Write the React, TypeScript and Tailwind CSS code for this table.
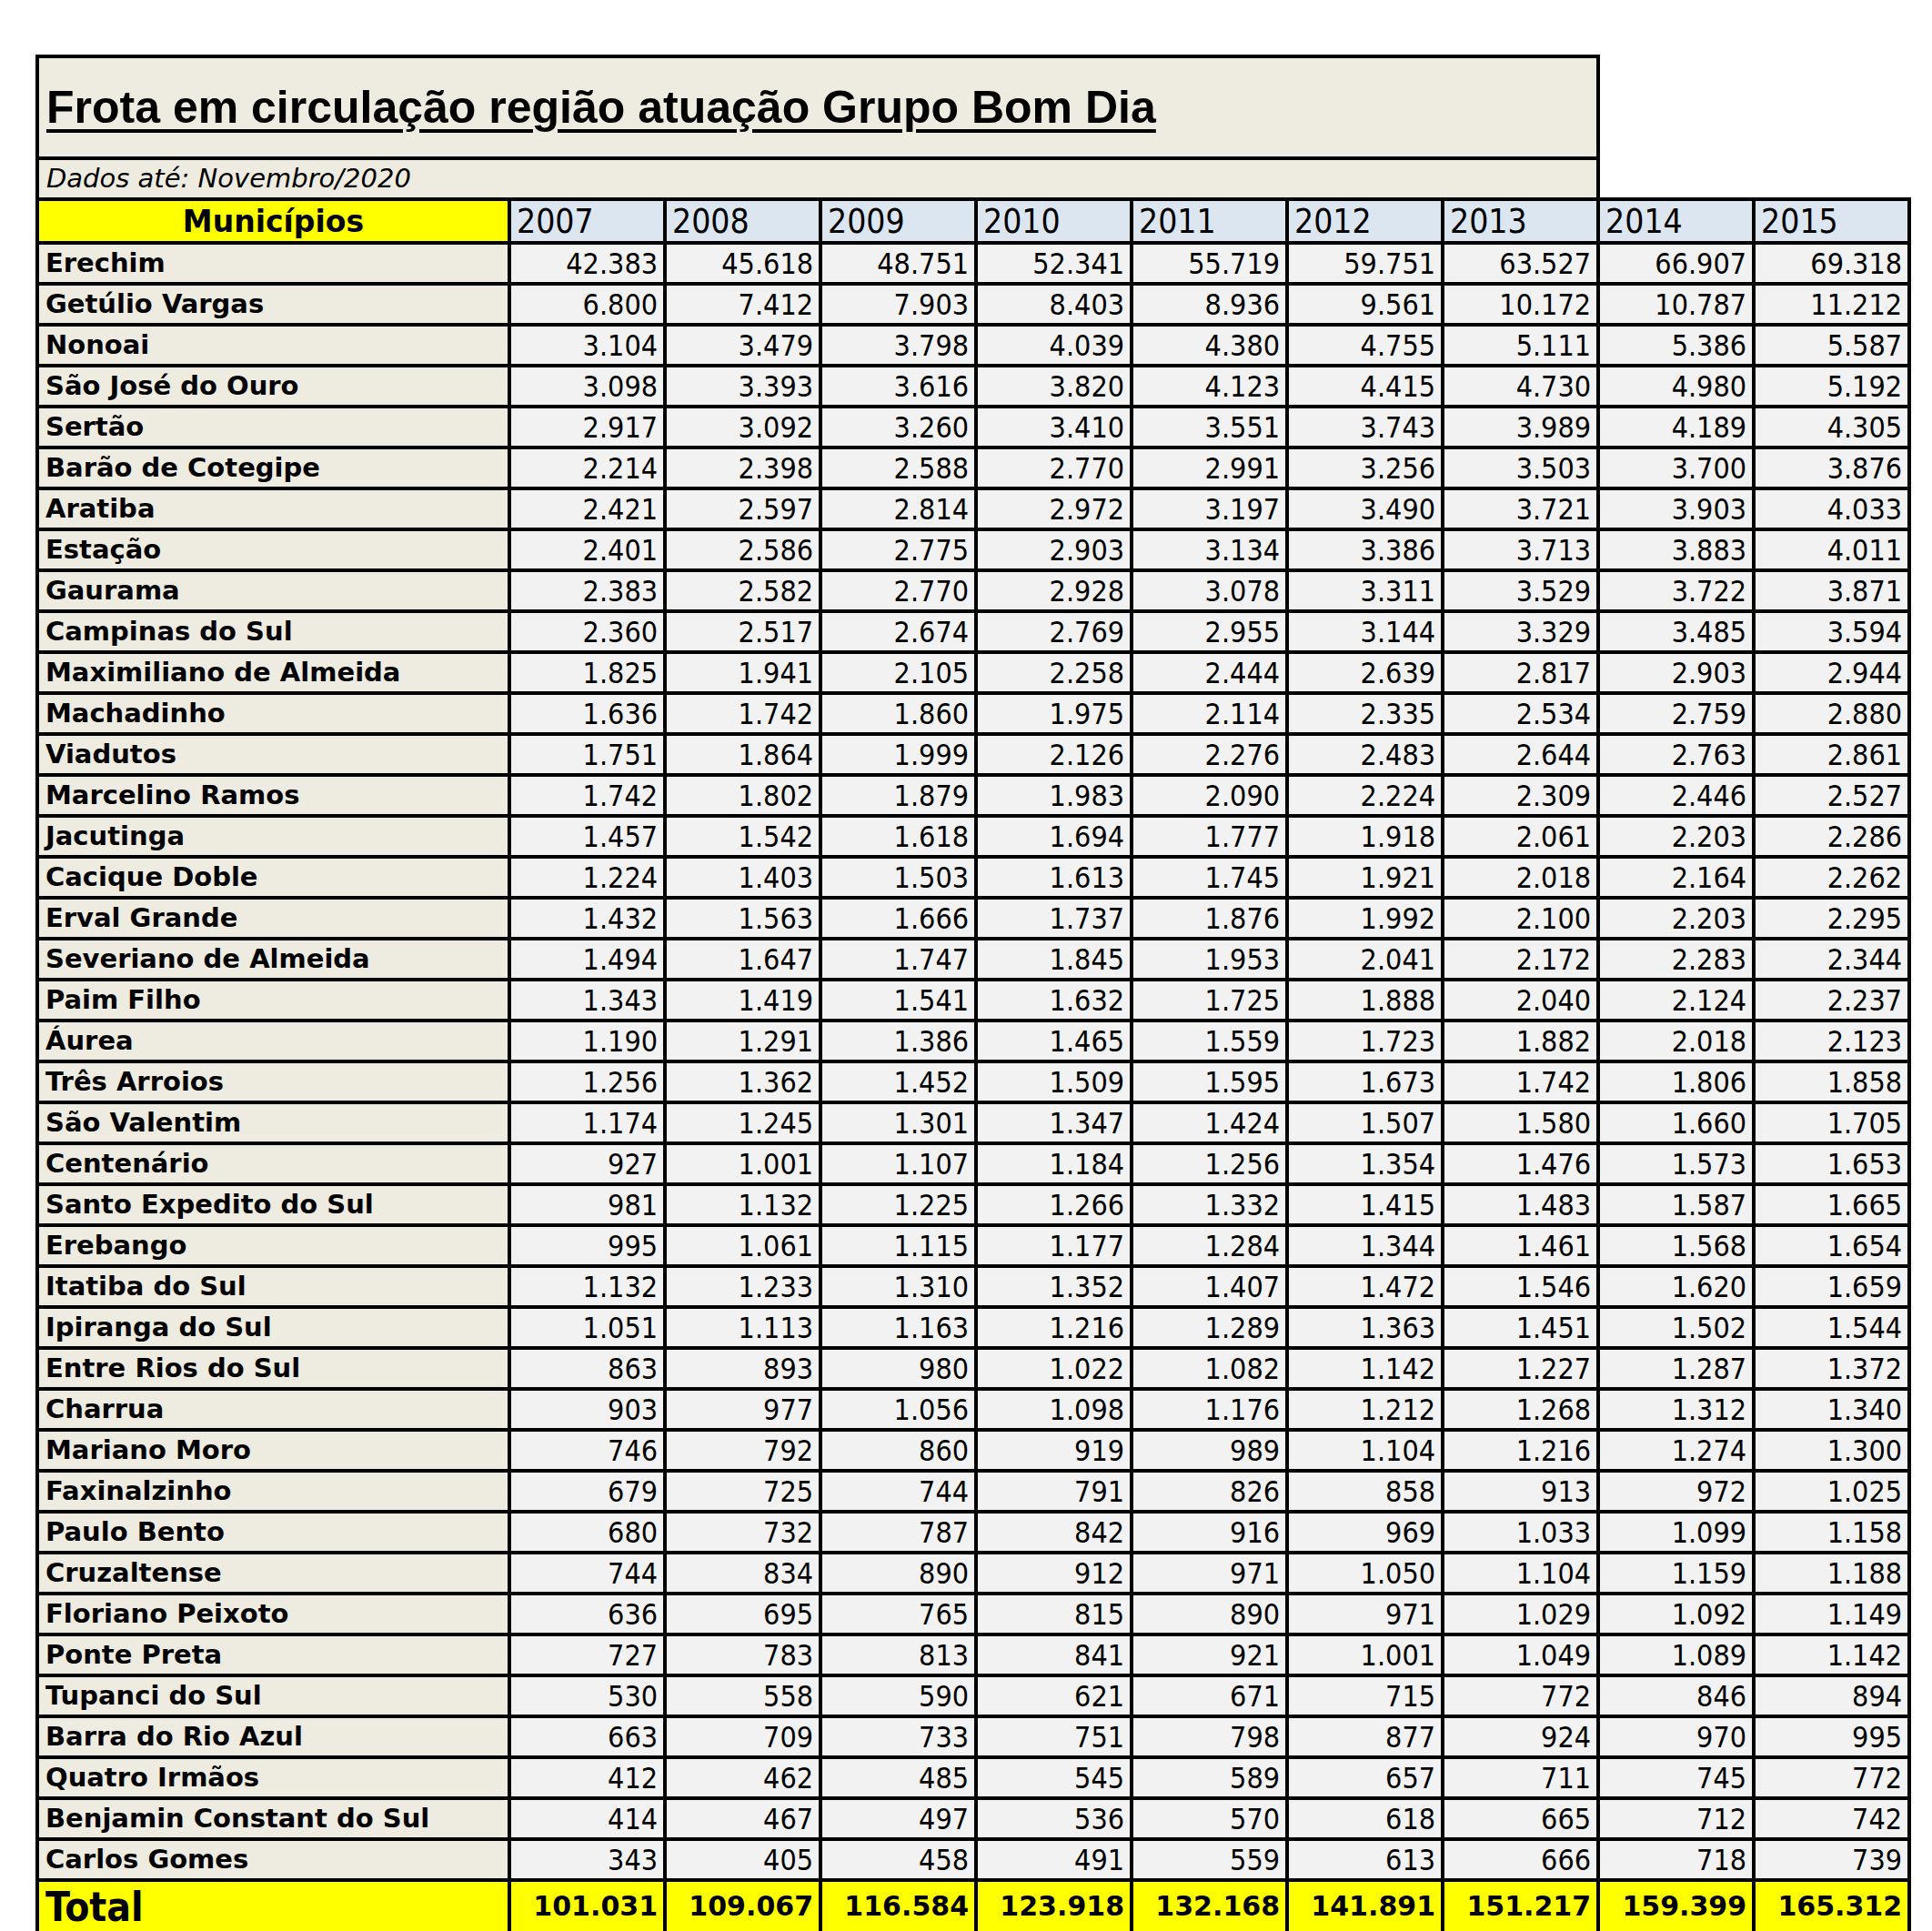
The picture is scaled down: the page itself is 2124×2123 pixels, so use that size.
import React from "react";

type Row = [string, ...string[]];

const rows: Row[] = [
  ["Erechim", "42.383", "45.618", "48.751", "52.341", "55.719", "59.751", "63.527", "66.907", "69.318"],
  ["Getúlio Vargas", "6.800", "7.412", "7.903", "8.403", "8.936", "9.561", "10.172", "10.787", "11.212"],
  ["Nonoai", "3.104", "3.479", "3.798", "4.039", "4.380", "4.755", "5.111", "5.386", "5.587"],
  ["São José do Ouro", "3.098", "3.393", "3.616", "3.820", "4.123", "4.415", "4.730", "4.980", "5.192"],
  ["Sertão", "2.917", "3.092", "3.260", "3.410", "3.551", "3.743", "3.989", "4.189", "4.305"],
  ["Barão de Cotegipe", "2.214", "2.398", "2.588", "2.770", "2.991", "3.256", "3.503", "3.700", "3.876"],
  ["Aratiba", "2.421", "2.597", "2.814", "2.972", "3.197", "3.490", "3.721", "3.903", "4.033"],
  ["Estação", "2.401", "2.586", "2.775", "2.903", "3.134", "3.386", "3.713", "3.883", "4.011"],
  ["Gaurama", "2.383", "2.582", "2.770", "2.928", "3.078", "3.311", "3.529", "3.722", "3.871"],
  ["Campinas do Sul", "2.360", "2.517", "2.674", "2.769", "2.955", "3.144", "3.329", "3.485", "3.594"],
  ["Maximiliano de Almeida", "1.825", "1.941", "2.105", "2.258", "2.444", "2.639", "2.817", "2.903", "2.944"],
  ["Machadinho", "1.636", "1.742", "1.860", "1.975", "2.114", "2.335", "2.534", "2.759", "2.880"],
  ["Viadutos", "1.751", "1.864", "1.999", "2.126", "2.276", "2.483", "2.644", "2.763", "2.861"],
  ["Marcelino Ramos", "1.742", "1.802", "1.879", "1.983", "2.090", "2.224", "2.309", "2.446", "2.527"],
  ["Jacutinga", "1.457", "1.542", "1.618", "1.694", "1.777", "1.918", "2.061", "2.203", "2.286"],
  ["Cacique Doble", "1.224", "1.403", "1.503", "1.613", "1.745", "1.921", "2.018", "2.164", "2.262"],
  ["Erval Grande", "1.432", "1.563", "1.666", "1.737", "1.876", "1.992", "2.100", "2.203", "2.295"],
  ["Severiano de Almeida", "1.494", "1.647", "1.747", "1.845", "1.953", "2.041", "2.172", "2.283", "2.344"],
  ["Paim Filho", "1.343", "1.419", "1.541", "1.632", "1.725", "1.888", "2.040", "2.124", "2.237"],
  ["Áurea", "1.190", "1.291", "1.386", "1.465", "1.559", "1.723", "1.882", "2.018", "2.123"],
  ["Três Arroios", "1.256", "1.362", "1.452", "1.509", "1.595", "1.673", "1.742", "1.806", "1.858"],
  ["São Valentim", "1.174", "1.245", "1.301", "1.347", "1.424", "1.507", "1.580", "1.660", "1.705"],
  ["Centenário", "927", "1.001", "1.107", "1.184", "1.256", "1.354", "1.476", "1.573", "1.653"],
  ["Santo Expedito do Sul", "981", "1.132", "1.225", "1.266", "1.332", "1.415", "1.483", "1.587", "1.665"],
  ["Erebango", "995", "1.061", "1.115", "1.177", "1.284", "1.344", "1.461", "1.568", "1.654"],
  ["Itatiba do Sul", "1.132", "1.233", "1.310", "1.352", "1.407", "1.472", "1.546", "1.620", "1.659"],
  ["Ipiranga do Sul", "1.051", "1.113", "1.163", "1.216", "1.289", "1.363", "1.451", "1.502", "1.544"],
  ["Entre Rios do Sul", "863", "893", "980", "1.022", "1.082", "1.142", "1.227", "1.287", "1.372"],
  ["Charrua", "903", "977", "1.056", "1.098", "1.176", "1.212", "1.268", "1.312", "1.340"],
  ["Mariano Moro", "746", "792", "860", "919", "989", "1.104", "1.216", "1.274", "1.300"],
  ["Faxinalzinho", "679", "725", "744", "791", "826", "858", "913", "972", "1.025"],
  ["Paulo Bento", "680", "732", "787", "842", "916", "969", "1.033", "1.099", "1.158"],
  ["Cruzaltense", "744", "834", "890", "912", "971", "1.050", "1.104", "1.159", "1.188"],
  ["Floriano Peixoto", "636", "695", "765", "815", "890", "971", "1.029", "1.092", "1.149"],
  ["Ponte Preta", "727", "783", "813", "841", "921", "1.001", "1.049", "1.089", "1.142"],
  ["Tupanci do Sul", "530", "558", "590", "621", "671", "715", "772", "846", "894"],
  ["Barra do Rio Azul", "663", "709", "733", "751", "798", "877", "924", "970", "995"],
  ["Quatro Irmãos", "412", "462", "485", "545", "589", "657", "711", "745", "772"],
  ["Benjamin Constant do Sul", "414", "467", "497", "536", "570", "618", "665", "712", "742"],
  ["Carlos Gomes", "343", "405", "458", "491", "559", "613", "666", "718", "739"],
];

const totals = ["101.031", "109.067", "116.584", "123.918", "132.168", "141.891", "151.217", "159.399", "165.312"];
const years = ["2007", "2008", "2009", "2010", "2011", "2012", "2013", "2014", "2015"];

export default function App() {
  return (
    <div className="min-h-screen w-full bg-white pl-[39px] pt-[60px] text-black [font-family:'DejaVu_Sans',sans-serif]">
      <table className="table-fixed border-collapse w-[2059px]">
        <colgroup>
          <col className="w-[519px]" />
          {years.map((y) => (
            <col key={y} className="w-[171px]" />
          ))}
        </colgroup>
        <tbody>
          <tr>
            <td
              colSpan={8}
              className="h-[112px] border-[4px] border-black bg-[#EEECE1] pl-[8px] align-middle"
            >
              <span className="text-[50px] font-bold leading-none underline decoration-[4px] underline-offset-[7px] [font-family:'Liberation_Sans',Arial,sans-serif]">
                Frota em circulação região atuação Grupo Bom Dia
              </span>
            </td>
            <td className="border-0 p-0" />
            <td className="border-0 p-0" />
          </tr>
          <tr>
            <td
              colSpan={8}
              className="h-[45px] border-[4px] border-black bg-[#EEECE1] pl-[8px] align-middle text-[29px] italic leading-none"
            >
              Dados até: Novembro/2020
            </td>
            <td className="border-0 p-0" />
            <td className="border-0 p-0" />
          </tr>
          <tr>
            <td className="h-[48px] border-[4px] border-black bg-[#FFFF00] text-center align-middle text-[33px] font-bold leading-none">
              Municípios
            </td>
            {years.map((y) => (
              <td
                key={y}
                className="border-[4px] border-black bg-[#DCE6F1] pl-[6px] text-left align-middle text-[37px] leading-none [font-family:'DejaVu_Sans_Condensed','DejaVu_Sans',sans-serif]"
              >
                {y}
              </td>
            ))}
          </tr>
          {rows.map((r) => (
            <tr key={r[0]}>
              <td className="h-[45px] border-[4px] border-black bg-[#EEECE1] pl-[7px] align-middle text-[29px] font-bold leading-none whitespace-nowrap">
                {r[0]}
              </td>
              {r.slice(1).map((v, i) => (
                <td
                  key={i}
                  className="border-[4px] border-black bg-[#F2F2F2] pr-[6px] text-right align-middle text-[32px] leading-none [font-family:'DejaVu_Sans_Condensed','DejaVu_Sans',sans-serif]"
                >
                  {v}
                </td>
              ))}
            </tr>
          ))}
          <tr>
            <td className="h-[62px] border-[4px] border-black bg-[#FFFF00] pl-[7px] align-top pt-[6px] text-[44px] font-bold leading-none [font-family:'DejaVu_Sans_Condensed','DejaVu_Sans',sans-serif]">
              Total
            </td>
            {totals.map((v, i) => (
              <td
                key={i}
                className="border-[4px] border-black bg-[#FFFF00] pr-[6px] pt-[12px] text-right align-top text-[30px] font-bold leading-none"
              >
                {v}
              </td>
            ))}
          </tr>
        </tbody>
      </table>
    </div>
  );
}
